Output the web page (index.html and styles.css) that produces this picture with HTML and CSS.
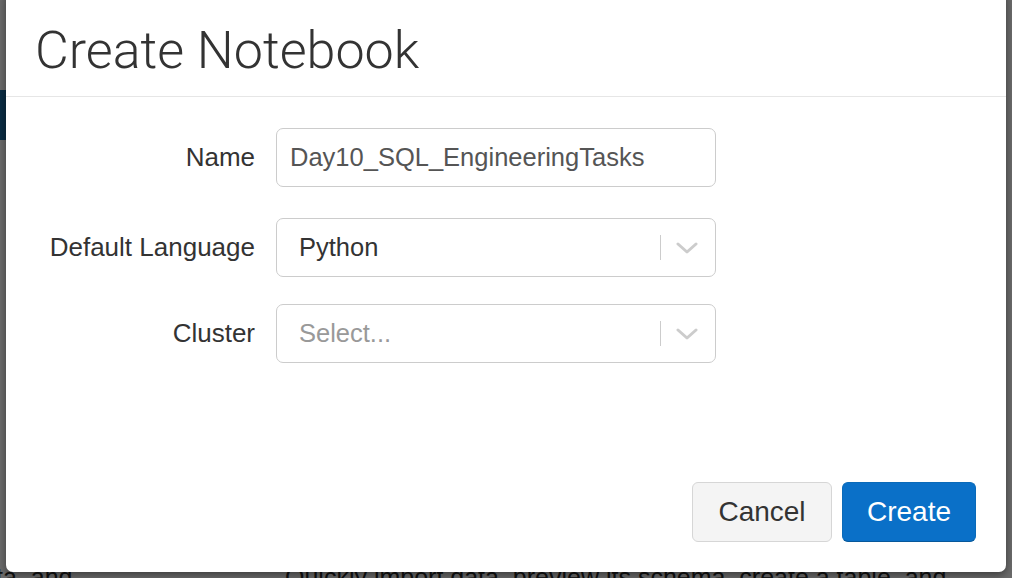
FILE: index.html
```html
<!DOCTYPE html>
<html>
<head>
<meta charset="utf-8">
<link rel="stylesheet" href="styles.css">
</head>
<body>
<div class="page">
  <div class="under">
    <div class="under-tab"></div>
    <div class="under-text">
      <span class="under-left">ta, and</span>
      <span class="under-right">Quickly import data, preview its schema, create a table, and</span>
    </div>
  </div>
  <div class="backdrop"></div>
  <div class="modal">
    <div class="modal-header"><h1 class="title">Create Notebook</h1></div>
    <div class="modal-body">
      <div class="row row-name">
        <span class="label">Name</span>
        <div class="field text-input">Day10_SQL_EngineeringTasks</div>
      </div>
      <div class="row row-lang">
        <span class="label">Default Language</span>
        <div class="field select">
          <span class="select-value">Python</span>
          <span class="select-sep"></span>
          <svg class="chev" width="22" height="12" viewBox="0 0 22 12"><path d="M2 2 L11 10 L20 2" fill="none" stroke="#cccccc" stroke-width="3" stroke-linecap="round" stroke-linejoin="round"/></svg>
        </div>
      </div>
      <div class="row row-cluster">
        <span class="label">Cluster</span>
        <div class="field select">
          <span class="select-value placeholder">Select...</span>
          <span class="select-sep"></span>
          <svg class="chev" width="22" height="12" viewBox="0 0 22 12"><path d="M2 2 L11 10 L20 2" fill="none" stroke="#cccccc" stroke-width="3" stroke-linecap="round" stroke-linejoin="round"/></svg>
        </div>
      </div>
    </div>
    <div class="modal-footer">
      <button class="btn btn-default">Cancel</button>
      <button class="btn btn-primary">Create</button>
    </div>
  </div>
</div>
</body>
</html>
```

FILE: styles.css
```css
* { box-sizing: border-box; }
html, body { margin: 0; padding: 0; }
body {
  width: 1012px;
  height: 578px;
  overflow: hidden;
  font-family: "Liberation Sans", Arial, sans-serif;
  background: #ffffff;
}
.page {
  position: relative;
  width: 1012px;
  height: 578px;
  overflow: hidden;
}
.under {
  display: flex;
  flex-direction: column;
  height: 578px;
  padding-top: 90px;
}
.under-tab {
  width: 60px;
  height: 50px;
  background: #1b6aa3;
  border-radius: 0 14px 14px 0;
}
.under-text {
  margin-top: auto;
  display: flex;
  color: #2a2a2a;
  font-size: 25px;
  line-height: 30px;
  height: 16px;
  white-space: nowrap;
}
.under-left { margin-left: -4px; width: 289px; }
.backdrop {
  position: absolute;
  inset: 0;
  background: rgba(0, 0, 0, 0.58);
}
.modal {
  position: absolute;
  left: 6px;
  top: -10px;
  width: 1000px;
  height: 582px;
  padding-top: 10px;
  background: #ffffff;
  border-radius: 7px;
  box-shadow: 0 3px 8px rgba(0, 0, 0, 0.45);
  display: flex;
  flex-direction: column;
}
.modal-header {
  height: 97px;
  flex: none;
  border-bottom: 1px solid #e6e6e6;
  padding-left: 29px;
}
.title {
  margin: 0;
  font-family: "Roboto", "Liberation Sans", sans-serif;
  font-weight: 300;
  font-size: 52px;
  line-height: 1;
  padding-top: 25px;
  color: #333333;
}
.modal-body {
  flex: 1;
  padding-top: 31px;
}
.row {
  display: flex;
  align-items: center;
}
.row-name { margin-bottom: 31px; }
.row-lang { margin-bottom: 27px; }
.label {
  width: 249px;
  text-align: right;
  font-size: 26px;
  color: #333333;
  margin-right: 21px;
}
.field {
  width: 440px;
  height: 59px;
  border: 1px solid #cccccc;
  border-radius: 7px;
  font-size: 25.5px;
  display: flex;
  align-items: center;
}
.text-input {
  padding-left: 13px;
  color: #555555;
}
.select {
  padding-left: 22px;
  color: #333333;
}
.select-value { flex: 1; }
.placeholder { color: #999999; }
.select-sep {
  width: 1px;
  height: 25px;
  background: #cccccc;
  margin-right: 15px;
}
.chev { margin-right: 17px; }
.modal-footer {
  display: flex;
  justify-content: flex-end;
  gap: 10px;
  padding: 0 30px 30px 0;
}
.btn {
  height: 60px;
  border-radius: 6px;
  font-family: "Liberation Sans", Arial, sans-serif;
  font-size: 28px;
  padding: 0;
}
.btn-default {
  width: 140px;
  background: #f4f4f4;
  border: 1px solid #d6d6d6;
  color: #333333;
}
.btn-primary {
  width: 134px;
  background: #0a70c8;
  border: 1px solid #0a6ab9;
  border-bottom-color: #07589a;
  color: #ffffff;
}
```
